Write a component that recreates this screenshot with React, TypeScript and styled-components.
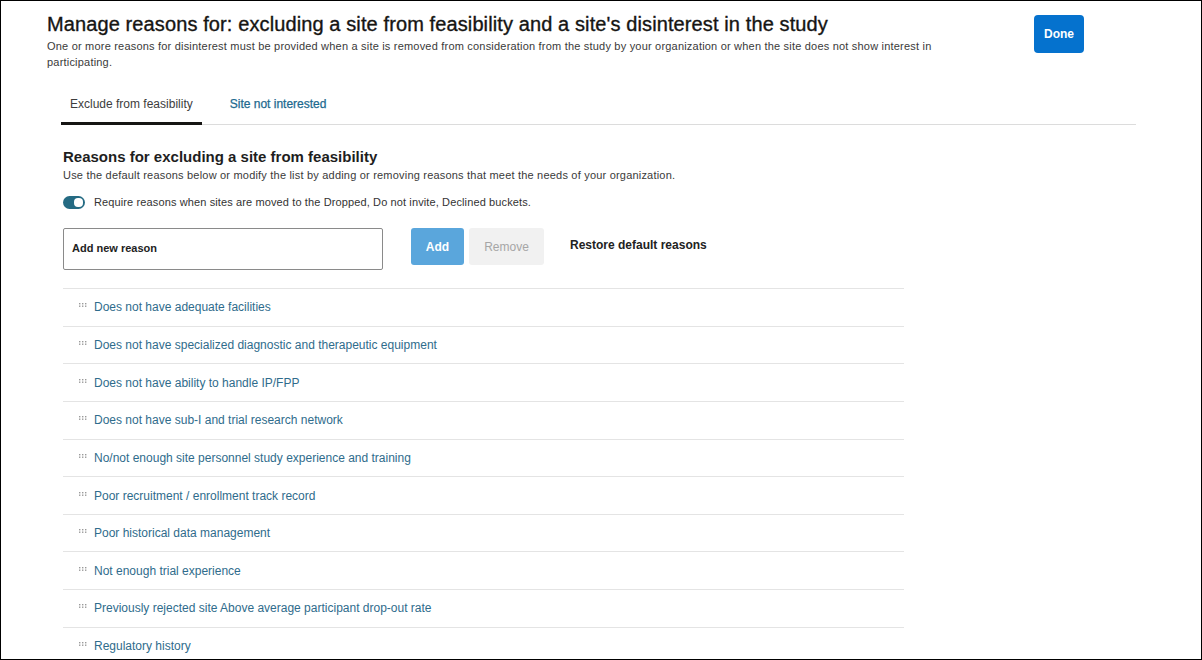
import React from "react";
import styled, { createGlobalStyle } from "styled-components";

const Global = createGlobalStyle`
  html, body { margin: 0; padding: 0; background: #fff; }
  body { font-family: "Liberation Sans", Arial, sans-serif; }
  * { box-sizing: border-box; }
`;

const Frame = styled.div`
  width: 1202px;
  height: 660px;
  border: 1px solid #000;
  overflow: hidden;
  background: #fff;
  display: flex;
  flex-direction: column;
`;

const Header = styled.header`
  display: flex;
  align-items: flex-start;
  padding: 11px 0 0 46px;
`;

const HeaderText = styled.div`
  width: 900px;
`;

const Title = styled.h1`
  margin: 0;
  font-size: 20px;
  line-height: 24px;
  font-weight: 400;
  letter-spacing: 0.11px;
  color: #161513;
  -webkit-text-stroke: 0.35px #161513;
`;

const Subtitle = styled.p`
  margin: 2px 0 0;
  font-size: 11px;
  line-height: 16px;
  letter-spacing: 0.2px;
  color: #3a3a3a;
`;

const DoneButton = styled.button`
  margin: 3px 0 0 87px;
  width: 50px;
  height: 38px;
  border: none;
  border-radius: 4px;
  background: #0572ce;
  color: #fff;
  font-family: inherit;
  font-size: 12px;
  font-weight: 700;
`;

const Body = styled.div`
  padding: 16px 65px 0 60px;
`;

const TabList = styled.div`
  display: flex;
  gap: 19px;
  border-bottom: 1px solid #dcdcdc;
`;

const Tab = styled.div<{ $active?: boolean }>`
  padding: 10px 9px 10px;
  margin-bottom: -1px;
  font-size: 12px;
  line-height: 16px;
  color: ${(p) => (p.$active ? "#3d3d3d" : "#1d6a8f")};
  -webkit-text-stroke: ${(p) => (p.$active ? "0" : "0.25px #1d6a8f")};
  border-bottom: 3px solid ${(p) => (p.$active ? "#161513" : "transparent")};
`;

const Section = styled.section`
  padding: 22px 0 0 2px;
`;

const SectionTitle = styled.h2`
  margin: 0;
  font-size: 15px;
  line-height: 20px;
  font-weight: 700;
  color: #1e1e1e;
`;

const Description = styled.p`
  margin: 0;
  font-size: 11px;
  line-height: 16px;
  letter-spacing: 0.2px;
  color: #3a3a3a;
`;

const ToggleRow = styled.label`
  display: flex;
  align-items: center;
  gap: 9px;
  margin-top: 11px;
  font-size: 11px;
  line-height: 16px;
  letter-spacing: 0.12px;
  color: #333;
`;

const Toggle = styled.span`
  position: relative;
  display: inline-block;
  width: 22px;
  height: 13px;
  border-radius: 7px;
  background: #256b83;
  &::after {
    content: "";
    position: absolute;
    right: 2px;
    top: 2px;
    width: 9px;
    height: 9px;
    border-radius: 4px;
    background: #fff;
  }
`;

const AddRow = styled.div`
  display: flex;
  align-items: flex-start;
  margin-top: 18px;
`;

const Input = styled.div`
  width: 320px;
  height: 42px;
  border: 1px solid #8a8a8a;
  border-radius: 2px;
  display: flex;
  align-items: center;
  padding: 0 0 2px 8px;
  font-size: 11px;
  font-weight: 700;
  color: #222;
`;

const Btn = styled.button<{ $kind: "primary" | "disabled" }>`
  height: 37px;
  border: none;
  border-radius: 3px;
  font-family: inherit;
  font-size: 12px;
  padding: 0 14px;
  background: ${(p) => (p.$kind === "primary" ? "#5aa6dc" : "#f1f1f1")};
  color: ${(p) => (p.$kind === "primary" ? "#fff" : "#a6a6a6")};
  font-weight: ${(p) => (p.$kind === "primary" ? 700 : 400)};
`;

const AddBtn = styled(Btn)`
  margin-left: 28px;
  width: 53px;
`;

const RemoveBtn = styled(Btn)`
  margin-left: 5px;
  width: 75px;
`;

const Restore = styled.span`
  margin-left: 26px;
  line-height: 35px;
  font-size: 12px;
  font-weight: 700;
  color: #222;
`;

const List = styled.ul`
  list-style: none;
  margin: 18px 0 0;
  padding: 0;
  width: 841px;
`;

const Row = styled.li`
  height: 37.65px;
  border-top: 1px solid #e4e4e4;
  display: flex;
  align-items: center;
  padding-left: 16px;
  font-size: 12px;
  color: #2f6c8c;
`;

const Handle = styled.svg`
  width: 8px;
  height: 4px;
  margin-right: 7px;
  position: relative;
  top: -2px;
  flex: none;
`;

const DragHandle = () => (
  <Handle viewBox="0 0 8 4">
    {[0, 3, 6].map((x) =>
      [0, 2.5].map((y) => <rect key={`${x}-${y}`} x={x} y={y} width="1.4" height="1.4" fill="#9a9a9a" />)
    )}
  </Handle>
);

const reasons = [
  "Does not have adequate facilities",
  "Does not have specialized diagnostic and therapeutic equipment",
  "Does not have ability to handle IP/FPP",
  "Does not have sub-I and trial research network",
  "No/not enough site personnel study experience and training",
  "Poor recruitment / enrollment track record",
  "Poor historical data management",
  "Not enough trial experience",
  "Previously rejected site Above average participant drop-out rate",
  "Regulatory history",
];

export default function App() {
  return (
    <Frame>
      <Global />
      <Header>
        <HeaderText>
          <Title>Manage reasons for: excluding a site from feasibility and a site's disinterest in the study</Title>
          <Subtitle>
            One or more reasons for disinterest must be provided when a site is removed from consideration from the study by your organization or when the site does not show interest in participating.
          </Subtitle>
        </HeaderText>
        <DoneButton>Done</DoneButton>
      </Header>
      <Body>
        <TabList>
          <Tab $active>Exclude from feasibility</Tab>
          <Tab>Site not interested</Tab>
        </TabList>
        <Section>
          <SectionTitle>Reasons for excluding a site from feasibility</SectionTitle>
          <Description>
            Use the default reasons below or modify the list by adding or removing reasons that meet the needs of your organization.
          </Description>
          <ToggleRow>
            <Toggle />
            Require reasons when sites are moved to the Dropped, Do not invite, Declined buckets.
          </ToggleRow>
          <AddRow>
            <Input>Add new reason</Input>
            <AddBtn $kind="primary">Add</AddBtn>
            <RemoveBtn $kind="disabled">Remove</RemoveBtn>
            <Restore>Restore default reasons</Restore>
          </AddRow>
          <List>
            {reasons.map((r) => (
              <Row key={r}>
                <DragHandle />
                {r}
              </Row>
            ))}
          </List>
        </Section>
      </Body>
    </Frame>
  );
}
